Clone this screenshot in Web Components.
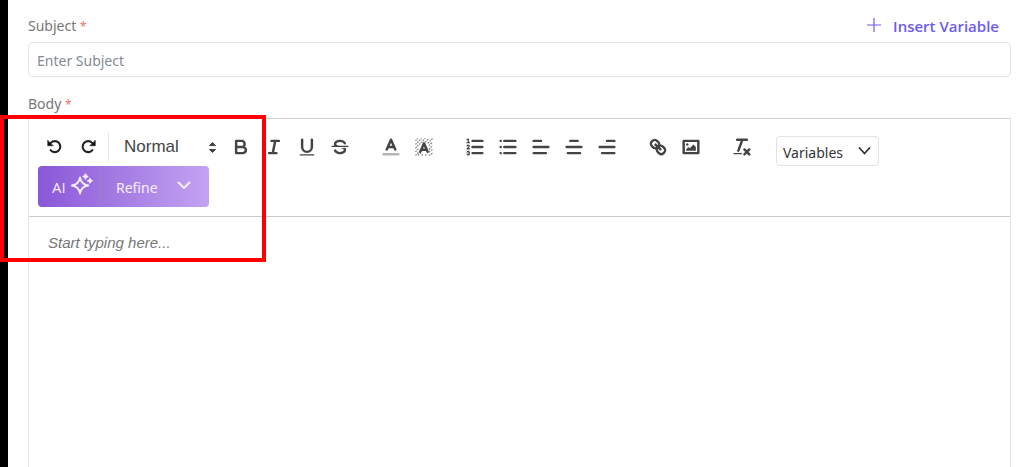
<!DOCTYPE html>
<html lang="en">
<head>
<meta charset="utf-8">
<title>Message template</title>
<style>
  body { margin: 0; background: #fff; font-family: "Noto Sans", "Open Sans", sans-serif; }
</style>
</head>
<body>
<template-form>
  <text-field label="Subject" placeholder="Enter Subject"><insert-variable slot="action"></insert-variable></text-field>
  <rich-editor label="Body" placeholder="Start typing here...">
    <tool-group slot="tools" class="history">
      <tool-button icon="undo" label="Undo"></tool-button>
      <tool-button icon="redo" label="Redo"></tool-button>
    </tool-group>
    <format-picker slot="tools"></format-picker>
    <tool-group slot="tools">
      <tool-button icon="bold" label="Bold"></tool-button>
      <tool-button icon="italic" label="Italic"></tool-button>
      <tool-button icon="underline" label="Underline"></tool-button>
      <tool-button icon="strike" label="Strikethrough"></tool-button>
    </tool-group>
    <tool-group slot="tools">
      <tool-button icon="color" label="Text colour"></tool-button>
      <tool-button icon="background" label="Highlight"></tool-button>
    </tool-group>
    <tool-group slot="tools">
      <tool-button icon="ordered" label="Numbered list"></tool-button>
      <tool-button icon="bullet" label="Bulleted list"></tool-button>
      <tool-button icon="left" label="Align left"></tool-button>
      <tool-button icon="center" label="Align centre"></tool-button>
      <tool-button icon="right" label="Align right"></tool-button>
    </tool-group>
    <tool-group slot="tools">
      <tool-button icon="link" label="Link"></tool-button>
      <tool-button icon="image" label="Image"></tool-button>
    </tool-group>
    <tool-group slot="tools">
      <tool-button icon="clean" label="Clear formatting"></tool-button>
    </tool-group>
    <variable-picker slot="tools"></variable-picker>
    <ai-refine slot="assist"></ai-refine>
  </rich-editor>
  <call-out slot="overlay"></call-out>
</template-form>

<script>
function define(name, render) {
  customElements.define(name, class extends HTMLElement {
    constructor() {
      super();
      this.attachShadow({ mode: "open" });
    }
    connectedCallback() {
      this.shadowRoot.innerHTML = render(this);
    }
  });
}

const undoShape = '<path stroke="#222" stroke-width="1.7" d="M5.600 5.600A4.500 4.500 0 1 1 5.400 11.600"/><path fill="#111" stroke="#111" stroke-width=".4" d="M3 3.600V8H7.400Z"/>';

const icons = {
  undo: undoShape,
  redo: `<g transform="matrix(-1 0 0 1 18 0)">${undoShape}</g>`,
  bold: '<path d="M5,4H9.5A2.5,2.5,0,0,1,9.5,9H5ZM5,9h5.5A2.5,2.5,0,0,1,10.5,14H5Z"/>',
  italic: '<path d="M7 4H13M5 14H11M8 14 10 4"/>',
  underline: '<path d="M5,3V9a4,4,0,0,0,8,0V3"/><rect class="fill" height="1" rx=".5" width="12" x="3" y="15"/>',
  strike: '<path class="thin" d="M2.5 8.5H15.5"/><path class="fill" d="M9.007,8C6.542,7.791,6,7.519,6,6.5,6,5.792,7.283,5,9,5c1.571,0,2.765.679,2.969,1.309a1,1,0,0,0,1.9-.617C13.356,4.106,11.354,3,9,3,6.2,3,4,4.538,4,6.5a3.2,3.2,0,0,0,.5,1.843Z"/><path class="fill" d="M8.984,10C11.457,10.208,12,10.479,12,11.5c0,.708-1.283,1.5-3,1.5-1.571,0-2.765-.679-2.969-1.309a1,1,0,1,0-1.9.617C4.644,13.894,6.646,15,9,15c2.8,0,5-1.538,5-3.5a3.2,3.2,0,0,0-.5-1.843Z"/>',
  color: '<path opacity=".4" d="M3 15H15"/><path d="M5.5 11 9 3 12.5 11M11.63 9H6.38"/>',
  background: '<path class="thin" opacity=".65" stroke-linecap="butt" stroke-dasharray="1.4 .7" d="M2 4 4 2M2 7 7 2M2 10 10 2M2 13 5 10M10 5 13 2M2 16 6 12M12 6 16 2M4 16 6 14M13 8 16 5M7 16 8 15M13 11 16 8M10 16 11 15M13 13 16 11M13 16 16 14"/><path d="M6 13 9 6 12 13M11.400 11.200H6.600"/>',
  ordered: '<path d="M7 4H15M7 9H15M7 14H15"/><path class="thin" d="M2.5 5.5H4.5M2.5 3 3.5 2.5V5.5M4.5,10.5h-2c0-.234,1.85-1.076,1.85-2.234A.959,.959,0,0,0,2.5,8.156M2.5,14.846a.959,.959,0,0,0,1.85-.109A.7,.7,0,0,0,3.75,14a.688,.688,0,0,0,.6-.736,.959,.959,0,0,0-1.85-.109"/>',
  bullet: '<path d="M6 4H15M6 9H15M6 14H15M3 4H3M3 9H3M3 14H3"/>',
  left: '<path d="M3 9H15M3 14H13M3 4H9"/>',
  center: '<path d="M3 9H15M4 14H14M6 4H12"/>',
  right: '<path d="M3 9H15M5 14H15M9 4H15"/>',
  link: '<path d="M7 7 11 11"/><path d="M8.9,4.577a3.476,3.476,0,0,1,.36,4.679A3.476,3.476,0,0,1,4.577,8.9C3.185,7.5,2.035,6.4,4.217,4.217S7.5,3.185,8.9,4.577Z"/><path d="M13.423,9.1a3.476,3.476,0,0,0-4.679-.36,3.476,3.476,0,0,0,.36,4.679c1.392,1.392,2.5,2.542,4.679.36S14.815,10.5,13.423,9.1Z"/>',
  image: '<rect height="10" width="12" x="3" y="4"/><circle class="fill" cx="6" cy="7" r="1"/><path class="fill" d="M5 12V11L7 9 8 10 11 7 13 9V12Z"/>',
  clean: '<path d="M5 3H13M6 12 9.35 3M11 11 15 15M15 11 11 15"/><rect class="fill" height="1" rx=".5" width="7" x="2" y="14"/>'
};

define("template-form", () => `
  <style>
    :host { display: flex; flex-direction: column; gap: 16px; position: relative; box-sizing: border-box;
      min-height: 100vh; padding: 15px 13px 0 20px; border-left: 8px solid #000; }
  </style>
  <slot></slot><slot name="overlay"></slot>`);

define("text-field", el => `
  <style>
    :host { display: block; }
    .head { display: flex; justify-content: space-between; align-items: center; height: 22px; margin-bottom: 5px; }
    label { font-size: 14px; line-height: 22px; color: #777; }
    span { font-size: 12px; line-height: 1; color: #f56c6c; }
    input { display: block; width: 100%; height: 35px; box-sizing: border-box; padding: 2px 8px 0;
      border: 1px solid #dfe3e8; border-radius: 5px; background: #fff; font: 14px "Noto Sans", sans-serif; color: #333; outline: 0; }
    input::placeholder { color: #858b93; opacity: 1; }
  </style>
  <div class="head"><label for="field">${el.getAttribute("label")} <span>*</span></label><slot name="action"></slot></div>
  <input id="field" type="text" placeholder="${el.getAttribute("placeholder")}">`);

define("insert-variable", () => `
  <style>
    :host { display: block; padding-right: 12px; }
    button { display: flex; align-items: center; gap: 12px; border: 0; padding: 0; background: none;
      font: 600 15px/22px "Open Sans", sans-serif; color: #6c5cf0; }
    svg { margin-bottom: 2px; }
  </style>
  <button type="button"><svg width="14" height="14" viewBox="0 0 14 14" fill="none" stroke="currentColor" stroke-width="1.2" aria-hidden="true"><path d="M7 0V14M0 7H14"/></svg>Insert Variable</button>`);

define("rich-editor", el => `
  <style>
    :host { display: flex; flex-direction: column; flex: 1; }
    label { font-size: 14px; line-height: 22px; color: #777; margin-bottom: 3px; }
    span { font-size: 12px; line-height: 1; color: #f56c6c; }
    .frame { display: flex; flex-direction: column; flex: 1; border: 1px solid #e4e4e4; border-top-color: #d4d4d4; border-bottom: 0; }
    .toolbar { border-bottom: 1px solid #ccc; padding: 14px 9px 9px; }
    .tools { display: flex; flex-wrap: wrap; align-items: flex-start; column-gap: 29px; padding-left: 6px; }
    textarea { flex: 1; min-height: 200px; border: 0; margin: 0; padding: 16px 19px; resize: none; outline: 0; background: #fff;
      font: 15px/20px "Liberation Sans", Arial, sans-serif; color: #333; }
    textarea::placeholder { color: #777; font-style: italic; opacity: 1; }
  </style>
  <label for="body">${el.getAttribute("label")} <span>*</span></label>
  <div class="frame">
    <div class="toolbar"><div class="tools"><slot name="tools"></slot></div><slot name="assist"></slot></div>
    <textarea id="body" placeholder="${el.getAttribute("placeholder")}"></textarea>
  </div>`);

define("tool-group", () => `
  <style>
    :host { display: flex; align-items: center; gap: 11px; height: 28px; }
    :host(.history) { padding-right: 9px; border-right: 1px solid #e6e6e6; margin-right: -14px; }
  </style>
  <slot></slot>`);

define("tool-button", el => `
  <style>
    :host { display: block; }
    button { display: block; width: 22px; height: 22px; padding: 0; border: 0; background: none; }
    svg { display: block; fill: none; stroke: #444; stroke-width: 2; stroke-linecap: round; stroke-linejoin: round; }
    .fill { fill: #444; stroke: none; }
    .thin { stroke-width: 1; }
  </style>
  <button type="button" aria-label="${el.getAttribute("label")}"><svg width="22" height="22" viewBox="0 0 18 18" aria-hidden="true">${icons[el.getAttribute("icon")]}</svg></button>`);

define("format-picker", () => `
  <style>
    :host { display: grid; align-items: center; width: 93px; height: 28px; margin-right: -16px; }
    select, svg { grid-area: 1 / 1; }
    select { appearance: none; width: 100%; height: 28px; border: 0; padding: 0; background: none;
      font: 17px/24px "Liberation Sans", Arial, sans-serif; color: #444; }
    svg { justify-self: end; pointer-events: none; }
  </style>
  <select aria-label="Text style"><option>Normal</option><option>Heading 1</option><option>Heading 2</option></select>
  <svg width="9" height="13" viewBox="0 0 9 13" fill="#444" stroke="#444" stroke-linejoin="round" aria-hidden="true"><path d="M1.5 4.5 4.5 1.5 7.5 4.5ZM1.5 8.5 4.5 11.5 7.5 8.5Z"/></svg>`);

define("variable-picker", () => `
  <style>
    :host { display: grid; align-items: center; width: 103px; margin-left: -6px; padding-top: 3px; }
    select, svg { grid-area: 1 / 1; }
    select { appearance: none; width: 100%; height: 30px; border: 1px solid #e2e2e2; border-radius: 4px; padding: 2px 6px 0; background: #fff;
      font: 14px "Noto Sans", sans-serif; color: #333; }
    svg { justify-self: end; margin-right: 8px; pointer-events: none; }
  </style>
  <select aria-label="Variables"><option>Variables</option></select>
  <svg width="13" height="8" viewBox="0 0 13 8" fill="none" stroke="#333" stroke-width="1.8" stroke-linecap="round" stroke-linejoin="round" aria-hidden="true"><path d="M1.5 1 6.5 6.5 11.5 1"/></svg>`);

define("ai-refine", () => `
  <style>
    :host { display: flex; align-items: center; box-sizing: border-box; width: 171px; height: 41px; border-radius: 4px;
      background: linear-gradient(90deg, #8a57d8, #a67de4 50%, #c3a3f3); }
    button { display: flex; align-items: center; border: 0; padding: 0; background: none; color: #f5effd; font: 14px/22px "Noto Sans", sans-serif; }
    .ai { box-sizing: border-box; width: 63px; height: 33px; padding-left: 14px; gap: 5px; font: 15px/22px "Open Sans", sans-serif; border-right: 1px solid #9a85b4; }
    .ai svg { margin-bottom: 6px; }
    .refine { flex: 1; justify-content: space-between; padding: 2px 18px 0 15px; }
    .refine svg { margin-bottom: 4px; }
  </style>
  <button type="button" class="ai">AI<svg width="22" height="22" viewBox="0 0 22 22" fill="none" stroke="currentColor" stroke-width="1.8" stroke-linejoin="round" stroke-linecap="round" aria-hidden="true"><path d="M9 4.500C9.800 9.500 12 11.700 17.300 12.500C12 13.300 9.800 15.500 9 20.500C8.200 15.500 6 13.300 .9 12.500C6 11.700 8.200 9.500 9 4.500Z"/><path stroke-width="2" d="M14.500 1.500V5.500M12.500 3.500H16.500M19 6V9.500M17.200 7.700H20.800"/></svg></button>
  <button type="button" class="refine">Refine<svg width="14" height="9" viewBox="0 0 14 9" fill="none" stroke="currentColor" stroke-width="2" stroke-linecap="round" stroke-linejoin="round" aria-hidden="true"><path d="M1.500 1.500 7 7 12.500 1.500"/></svg></button>`);

define("call-out", () => `
  <style>
    :host { position: absolute; left: -8px; top: 115px; width: 266px; height: 147px; box-sizing: border-box; border: 4px solid #fe0000; pointer-events: none; }
  </style>`);
</script>
</body>
</html>
